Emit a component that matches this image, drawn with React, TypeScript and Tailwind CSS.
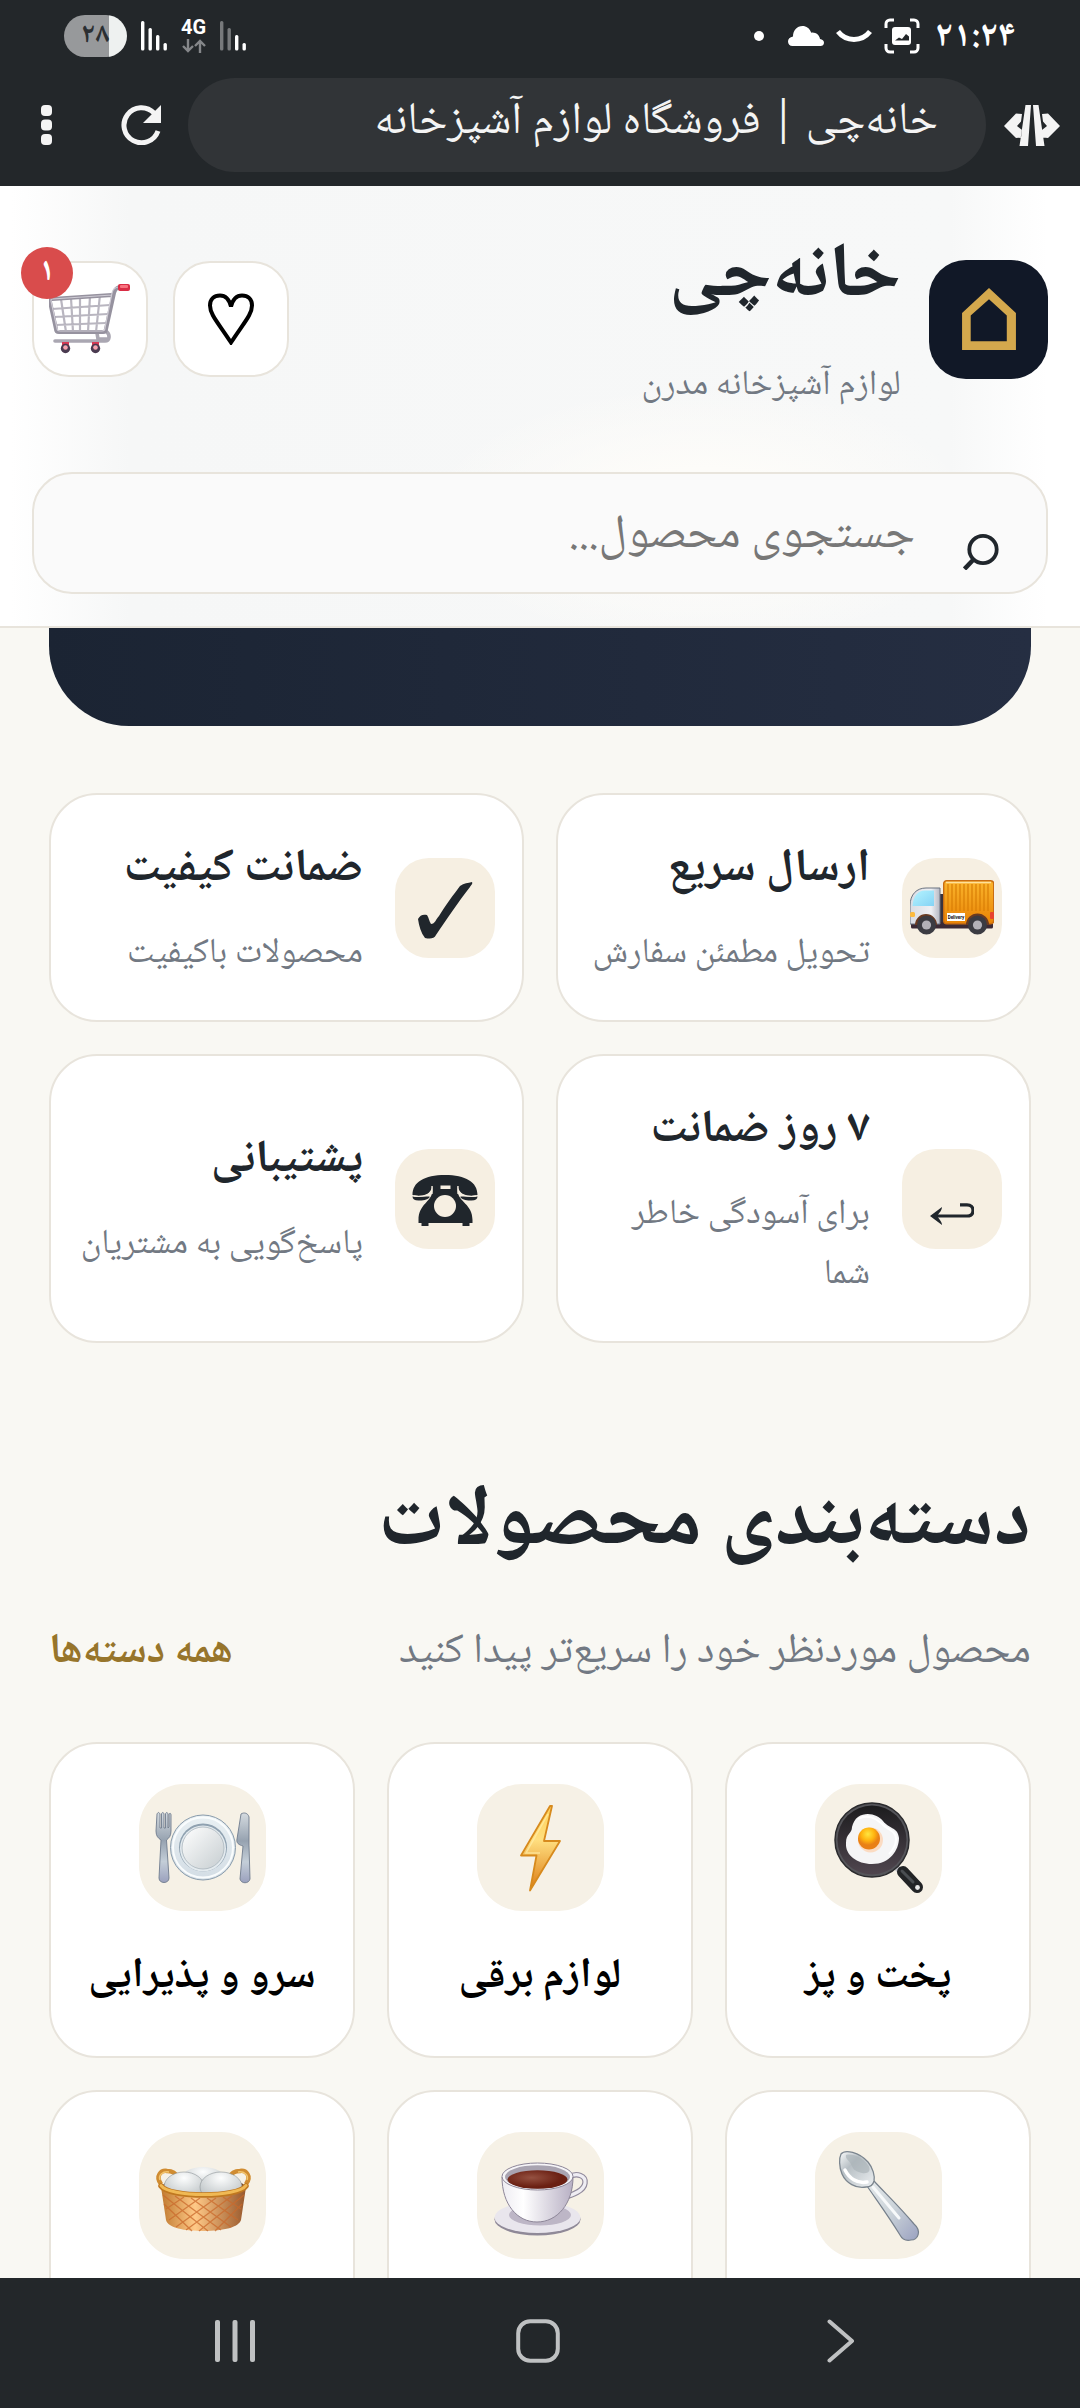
import type { ReactNode } from 'react'

type Feature = { title: string; text: string; icon: ReactNode }
type Category = { id: string; name?: string; icon: ReactNode }

/* ---------- status bar icons ---------- */

function Signal({ weak = false }: { weak?: boolean }) {
  const bars = [22, 29, 36, 44]
  return (
    <svg width="26" height="30" viewBox="0 22 26 30" aria-hidden="true">
      {bars.map((top, i) => (
        <rect key={top} x={i * 7.5} y={top} width="3.4" height={51.5 - top} rx="1.5" fill={weak && i < 2 ? '#77797b' : '#fff'} />
      ))}
    </svg>
  )
}

function CaptureIcon() {
  return (
    <svg width="36" height="36" viewBox="0 0 36 36" fill="none" aria-hidden="true">
      <path d="M2 10V6a4 4 0 0 1 4-4h4M26 2h4a4 4 0 0 1 4 4v4M34 26v4a4 4 0 0 1-4 4h-4M10 34H6a4 4 0 0 1-4-4v-4" stroke="#fff" strokeWidth="3" />
      <rect x="8" y="9" width="19" height="18" rx="3" fill="#fff" />
      <path d="M11 22.500l4-3 3 1.500 4-5 3 2.500v4z" fill="#23272a" />
    </svg>
  )
}

function CloudIcon() {
  return (
    <svg width="36" height="20" viewBox="0 0 36 20" aria-hidden="true">
      <path d="M4.500 20C1.800 20 0 18 0 15.500S1.800 11 5 10.500C5 4.500 9 0 14.500 0c4 0 7 2.200 8.700 6.700C27.500 6 31.500 9 32 13c2.400.3 4 1.700 4 3.700S34.500 20 32.500 20z" fill="#fff" />
    </svg>
  )
}

function ArcIcon() {
  return (
    <svg width="36" height="14" viewBox="0 0 36 14" fill="none" aria-hidden="true">
      <path d="M2 2.500C10 13 26 13 34 2.500" stroke="#fff" strokeWidth="5" />
    </svg>
  )
}

function DataArrows() {
  return (
    <svg width="24" height="14" viewBox="0 0 24 14" fill="none" stroke="#85878a" strokeWidth="2.400" aria-hidden="true">
      <path d="M6 0v12M1 7l5 5 5-5M18 14V2M13 7l5-5 5 5" />
    </svg>
  )
}

/* ---------- browser icons ---------- */

function CodeIcon() {
  return (
    <svg width="56" height="44" viewBox="0 -2 56 44" aria-hidden="true">
      <path d="M18 9l-6-.5L0 21l12 12 5-.5 1-7.500-5-4 4-4.500zM38 9l6-.5L56 21 44 33l-5-.5-1-7.500 5-4-4-4.500zM21.500 0H27l-3 41h-8.500zM29 0h5.500l6 41H32z" fill="#f4f4f4" />
    </svg>
  )
}

function ReloadIcon() {
  return (
    <svg width="40" height="40" viewBox="0 0 40 40" fill="none" aria-hidden="true">
      <path d="M37 26A17.500 17.500 0 1 1 33 8" stroke="#f4f4f4" strokeWidth="5" />
      <path d="M40 0v18H22z" fill="#f4f4f4" />
    </svg>
  )
}

function DotsIcon() {
  return (
    <svg width="11" height="40" viewBox="0 0 11 40" fill="#f4f4f4" aria-hidden="true">
      <rect width="11" height="11" rx="4" />
      <rect y="14.500" width="11" height="11" rx="4" />
      <rect y="29" width="11" height="11" rx="4" />
    </svg>
  )
}

/* ---------- header icons ---------- */

function HouseIcon() {
  return (
    <svg width="54" height="62" viewBox="0 0 53 61" aria-hidden="true">
      <path fillRule="evenodd" d="M0 24.500L26.500 0 53 24.500V61H0zM8.500 27v25.500H44V27L26.500 11z" fill="#d4a84d" />
    </svg>
  )
}

function HeartIcon() {
  return (
    <svg width="46" height="52" viewBox="0 0 46 51" fill="none" aria-hidden="true">
      <path d="M23 13C21 5 17 2 12 2 6 2 2 6 2 12c0 9 8 17 21 37 13-20 21-28 21-37 0-6-4-10-10-10-5 0-9 3-11 11z" stroke="#000" strokeWidth="4" />
    </svg>
  )
}

function CartIcon() {
  return (
    <svg width="82" height="70" viewBox="0 0 82 70" fill="none" aria-hidden="true">
      <g stroke="#b9b6c0" strokeWidth="2.200">
        <path d="M12 15l5 33M22 14l2 34M31 13v35M41 12l-2 36M51 11l-4 37M3 25l58-4M5 33l54-3M6 41l51-2" />
      </g>
      <path d="M48 49l1 6h10M58 48c3 3 3 9-2 9H6" stroke="#aaa7b2" strokeWidth="3.600" strokeLinecap="round" />
      <path d="M63 11L3 15c-2 0-2 1-2 3l6 27c0 3 1 3 3 3h44c2 0 3-1 3-3l8-36c1-4 3-6 7-6" stroke="#96929f" strokeWidth="4" strokeLinejoin="round" />
      <path d="M63 11L3 15c-1 0-1 1-1 2l6 27c0 2 1 3 3 3h42c2 0 3-1 3-3l7-35c1-4 3-6 7-6" stroke="#cfccd5" strokeWidth="1.200" />
      <rect x="69" y="0" width="12" height="7" rx="2" fill="#d92d45" />
      <rect x="71" y="1" width="8" height="3" rx="1" fill="#f7737f" />
      <path d="M13 58h7v6h-7zM43 58h7v6h-7z" fill="#d63a55" />
      <circle cx="16.500" cy="64.500" r="4.700" fill="#4a3a50" />
      <circle cx="46.500" cy="64.500" r="4.700" fill="#4a3a50" />
      <circle cx="16.500" cy="63.500" r="2.300" fill="#f7a3ae" />
      <circle cx="46.500" cy="63.500" r="2.300" fill="#f7a3ae" />
    </svg>
  )
}

function SearchIcon() {
  return (
    <svg width="36" height="74" viewBox="0 -38 36 74" fill="none" className="shrink-0" aria-hidden="true">
      <circle cx="20" cy="15.500" r="13.700" stroke="#20262c" strokeWidth="3.800" />
      <path d="M11 25l-9.500 10" stroke="#20262c" strokeWidth="4.500" />
    </svg>
  )
}

/* ---------- feature icons ---------- */

function TruckIcon() {
  return (
    <svg width="84" height="55" viewBox="0 0 84 55" aria-hidden="true">
      <defs>
        <linearGradient id="cargo" x1="0" y1="0" x2="0" y2="1"><stop stopColor="#fbb52c" /><stop offset="1" stopColor="#e98406" /></linearGradient>
        <linearGradient id="glass" x1="0" y1="0" x2="1" y2="1"><stop stopColor="#b5f4ff" /><stop offset="1" stopColor="#85d3f5" /></linearGradient>
        <linearGradient id="cab" x1="0" y1="0" x2="1" y2="0"><stop stopColor="#d9dce3" /><stop offset=".7" stopColor="#eff0f4" /><stop offset="1" stopColor="#b4b7c2" /></linearGradient>
      </defs>
      <path d="M29 14h6v34h-6z" fill="#39333f" />
      <path d="M1 42h82v5a1.500 1.500 0 0 1-1.500 1.500h-79A1.500 1.500 0 0 1 1 47z" fill="#3c2a35" />
      <rect x="33.700" y=".7" width="50" height="43" rx="3" fill="url(#cargo)" stroke="#c96d12" strokeWidth="1.400" />
      <path d="M36 2.500h45" stroke="#ffe09a" strokeWidth="1.600" />
      <path d="M38 4v27M42 4v27M46 4v27M50 4v27M54 4v27M58 4v27M62 4v27M66 4v27M70 4v27M74 4v27M78 4v27" stroke="#d97f05" strokeWidth="1.200" />
      <path d="M0 44V26C0 14 7 8 16 8h14v36z" fill="url(#cab)" stroke="#6b7380" strokeWidth="1" />
      <path d="M2.500 26C3 16 8 10.500 15 10.500h9V26z" fill="url(#glass)" />
      <rect x="0" y="32" width="5" height="5" rx="1.500" fill="#fdbb3f" />
      <rect x="80" y="32" width="4" height="7" rx="1" fill="#e8432f" />
      <rect x="37" y="33" width="18" height="8" fill="#fff" />
      <text x="46" y="38.800" textAnchor="middle" fontSize="4.600" fontWeight="700" fontFamily="Roboto, sans-serif" fill="#111">Delivery</text>
      <path d="M5 45a11 11 0 0 1 22 0zM56 45a11 11 0 0 1 23 0z" fill="#6a3b22" />
      <circle cx="16.500" cy="45" r="9.500" fill="#3b3b42" />
      <circle cx="67.500" cy="45" r="9.500" fill="#3b3b42" />
      <circle cx="16.500" cy="45" r="4.600" fill="#b3b1b8" />
      <circle cx="67.500" cy="45" r="4.600" fill="#b3b1b8" />
    </svg>
  )
}

function CheckIcon() {
  return (
    <svg width="55" height="68" viewBox="0 -8 55 68" aria-hidden="true">
      <path d="M0 37c2-4 5-5 9-4 2 3 2 6 4 9 4 0 5-5 8-8C27 24 36 12 42 4c4-3 8-3 12-4 1 2-1 3-2 5C41 19 28 38 18 53c-2 4-6 4-11 3C3 51 1 44 0 37z" fill="#20262c" />
    </svg>
  )
}

function ReturnIcon() {
  return (
    <svg width="44" height="52" viewBox="0 -30 44 52" fill="none" aria-hidden="true">
      <path d="M4 13h33c4 0 6-2 6-5.500S41 1.800 37 1.800h-7" stroke="#20262c" strokeWidth="3.200" />
      <path d="M12 4L0 13l12 9c0-3-2-5-5-9 3-4 5-6 5-9z" fill="#20262c" />
    </svg>
  )
}

function PhoneIcon() {
  return (
    <svg width="66" height="56" viewBox="0 -4 65 56" aria-hidden="true">
      <path d="M20 10h25v6c1 11 15 13 15 29v3h-3v3h-7v-3H16v3H9v-3H6v-3c0-16 13-18 14-29z" fill="#20262c" />
      <path d="M0 20C0 7 12 0 32.500 0S65 7 65 20l-6 1c-8 0-12-3-14-10H20c-2 7-6 10-14 10z" fill="#20262c" />
      <path d="M0 21.500h17v1C15 25 10 25.500 6 25.500S0 24 0 21.500zM48 21.500h17c0 2.500-2 4-6 4s-9-.5-11-3z" fill="#20262c" />
      <path d="M19.500 11v8M45.500 11v8M1 21c8 1 14 0 18-4M64 21c-8 1-14 0-18-4" stroke="#f6efe2" strokeWidth="1.300" fill="none" />
      <ellipse cx="32.500" cy="31" rx="11" ry="11" fill="#f6efe2" />
      <path d="M28 10.500h10v3.500H28z" fill="#f6efe2" />
    </svg>
  )
}

/* ---------- category icons, all on the 127px tile grid ---------- */

function Tile({ children }: { children: ReactNode }) {
  return <svg width="127" height="127" viewBox="0 0 127 127" aria-hidden="true">{children}</svg>
}

function PanIcon() {
  return (
    <Tile>
      <defs>
        <linearGradient id="pan" x1="0" y1="0" x2="0" y2="1"><stop stopColor="#1c1c1e" /><stop offset="1" stopColor="#50464f" /></linearGradient>
        <radialGradient id="yolk" cx=".45" cy=".3"><stop stopColor="#ffe640" /><stop offset=".6" stopColor="#ffb30f" /><stop offset="1" stopColor="#e98016" /></radialGradient>
      </defs>
      <path d="M80 82l7 7" stroke="#c6c6cc" strokeWidth="6" />
      <path d="M88 88l14 15" stroke="#222426" strokeWidth="12" strokeLinecap="round" />
      <path d="M87 87l11 11" stroke="#4a4e52" strokeWidth="3" strokeLinecap="round" />
      <circle cx="102.500" cy="103.500" r="2.400" fill="#e9e9e9" />
      <circle cx="57" cy="56" r="37" fill="#55555a" stroke="#2a2a2d" strokeWidth="1.500" />
      <circle cx="57" cy="56" r="34.500" fill="url(#pan)" />
      <path d="M43 33c9-6 20-2 25 4 6 8 15 6 16 17 0 12-9 26-27 26-15 0-27-9-26-21 0-10 6-9 6-16 1-4 3-8 6-10z" fill="#f5f5f6" />
      <path d="M43 35c9-5 18-1 23 4 6 7 15 7 15 16 0 5-3 11-7 15" stroke="#fff" strokeWidth="2" fill="none" />
      <circle cx="55.500" cy="56" r="12.500" fill="#ffc9a0" opacity=".6" />
      <circle cx="54" cy="54.500" r="11" fill="url(#yolk)" />
    </Tile>
  )
}

function BoltIcon() {
  return (
    <Tile>
      <defs>
        <linearGradient id="bolt" x1="0" y1="0" x2="0" y2="1"><stop stopColor="#ffd158" /><stop offset=".4" stopColor="#ffdf80" /><stop offset="1" stopColor="#dc7a12" /></linearGradient>
      </defs>
      <path d="M73 22L44 71.500h15.500L53 106.500 83 57H67l8-35z" fill="url(#bolt)" stroke="#d78a1d" strokeWidth="1.800" strokeLinejoin="round" />
      <path d="M71 30L49 69h14" stroke="#ffeeaa" strokeWidth="1.500" fill="none" opacity=".7" />
    </Tile>
  )
}

function PlateIcon() {
  return (
    <Tile>
      <defs>
        <linearGradient id="steel" x1="0" y1="0" x2="0" y2="1"><stop stopColor="#d5dbe0" /><stop offset=".4" stopColor="#96a2b0" /><stop offset=".7" stopColor="#c4ced8" /><stop offset="1" stopColor="#9aa0bd" /></linearGradient>
        <linearGradient id="dish" x1="0" y1="0" x2="1" y2="1"><stop stopColor="#fff" /><stop offset="1" stopColor="#c6cdd0" /></linearGradient>
        <linearGradient id="lip" x1="0" y1="0" x2="0" y2="1"><stop stopColor="#e9f0f3" /><stop offset="1" stopColor="#d3dde5" /></linearGradient>
      </defs>
      <path d="M18 30c1-2 2-2 3 0v14h1.500V30c.5-2 2-2 2.500 0v14h1.500V30c.5-2 2-2 2.500 0v14l1-1V30c1-1 2-1 2 1v16c0 5-2 7-4.500 9L30 94c0 6-10 6-10 0l2-38c-3-2-5-4-5-9z" fill="url(#steel)" stroke="#6f7c8d" strokeWidth=".9" />
      <path d="M102 30c3-2 7-1 8 3v28l1 34c-1 5-9 5-10 0l3-33c-4-1-7-3-6-7z" fill="url(#steel)" stroke="#6f7c8d" strokeWidth=".9" />
      <circle cx="64" cy="63.500" r="32.500" fill="url(#lip)" stroke="#8a9cac" strokeWidth="1" />
      <circle cx="64" cy="63.500" r="30" fill="none" stroke="#f9fcfd" strokeWidth="2" />
      <circle cx="64" cy="63.500" r="24" fill="#8fa1b0" />
      <circle cx="64" cy="64.500" r="23" fill="#e4ebef" />
      <circle cx="64" cy="64" r="21" fill="url(#dish)" stroke="#aab5bd" strokeWidth=".8" />
    </Tile>
  )
}

function SpoonIcon() {
  return (
    <Tile>
      <defs>
        <linearGradient id="bowl" x1="0" y1="0" x2="1" y2="1"><stop stopColor="#fbfcfc" /><stop offset=".35" stopColor="#b7bfc4" /><stop offset="1" stopColor="#eef1f3" /></linearGradient>
        <linearGradient id="stem" x1="0" y1="0" x2="1" y2="1"><stop stopColor="#e3e8ea" /><stop offset=".5" stopColor="#cbd3d9" /><stop offset="1" stopColor="#9aa1c0" /></linearGradient>
      </defs>
      <path d="M52 54c3-1 5-3 7-5 10 11 24 24 40 43 8 7 4 16-3 16-5 1-9-1-11-5C74 85 63 70 52 54z" fill="url(#stem)" stroke="#76808c" strokeWidth="1.200" />
      <path d="M58 55l26 31" stroke="#f7f9fa" strokeWidth="3" strokeLinecap="round" />
      <path d="M26 22c4-5 18-2 27 8 5 6 7 14 6 19-1 4-4 6-8 6-10 2-20-4-24-13-3-7-3-16-1-20z" fill="url(#bowl)" stroke="#7c868f" strokeWidth="1.300" />
      <path d="M31 23c7-2 17 3 22 10 4 6 0 9-6 8-8-2-9-4-11-9-2-4-6-5-5-9z" fill="#a9b2b7" opacity=".65" />
      <path d="M30 38c4 8 12 14 22 12" stroke="#fff" strokeWidth="3.500" fill="none" strokeLinecap="round" />
    </Tile>
  )
}

function CupIcon() {
  return (
    <Tile>
      <defs>
        <linearGradient id="cup" x1="0" y1="0" x2="1" y2="0"><stop stopColor="#eeecf2" /><stop offset=".3" stopColor="#fff" /><stop offset="1" stopColor="#b8b0c4" /></linearGradient>
        <radialGradient id="coffee" cx=".4" cy=".4"><stop stopColor="#955141" /><stop offset="1" stopColor="#6a1f12" /></radialGradient>
      </defs>
      <ellipse cx="60.500" cy="87.500" rx="43" ry="16" fill="#8f8998" />
      <ellipse cx="60.500" cy="85.500" rx="43" ry="15.500" fill="#e9e6ed" />
      <ellipse cx="63" cy="83" rx="31" ry="10.500" fill="#bdb6c6" />
      <path d="M92 45c8-5 17-1 16 6-1 8-12 12-23 15" fill="none" stroke="#918a9c" strokeWidth="5.500" />
      <path d="M92 45c8-5 17-1 16 6-1 8-12 12-23 15" fill="none" stroke="#efedf3" strokeWidth="3.200" />
      <path d="M25 45c0 27 15 45 35 45s36-18 36-45z" fill="url(#cup)" stroke="#8d8698" strokeWidth="1" />
      <ellipse cx="60.500" cy="44.500" rx="35.500" ry="13.500" fill="#f6f5f8" stroke="#8d8698" strokeWidth="1" />
      <ellipse cx="60.500" cy="45" rx="32.500" ry="11.800" fill="#a9a4b1" />
      <ellipse cx="60.500" cy="47.500" rx="30" ry="9.300" fill="url(#coffee)" />
    </Tile>
  )
}

function BasketIcon() {
  return (
    <Tile>
      <defs>
        <radialGradient id="egg" cx=".5" cy=".2" r=".8"><stop stopColor="#fdfefe" /><stop offset="1" stopColor="#b3babd" /></radialGradient>
        <linearGradient id="wicker" x1="0" y1="0" x2="1" y2="0"><stop stopColor="#c07a30" /><stop offset=".4" stopColor="#ffc987" /><stop offset="1" stopColor="#98582c" /></linearGradient>
      </defs>
      <path d="M22 52c-6-8 0-14 6-13 6 0 9 3 10 6M107 52c6-8 0-14-6-13-6 0-9 3-10 6" fill="none" stroke="#d08c31" strokeWidth="4.500" />
      <path d="M21 48c-2-5 3-9 9-8M108 48c2-5-3-9-9-8" fill="none" stroke="#f3c56e" strokeWidth="1.500" />
      <ellipse cx="64.500" cy="55" rx="42" ry="9" fill="#7d481c" />
      <ellipse cx="64" cy="47" rx="22" ry="12" fill="url(#egg)" />
      <ellipse cx="45" cy="55" rx="20" ry="15" fill="url(#egg)" stroke="#8d9497" strokeWidth=".6" />
      <ellipse cx="82" cy="55" rx="21" ry="15" fill="url(#egg)" stroke="#8d9497" strokeWidth=".6" />
      <path d="M22 55l5 33c2 8 18 11 38 11s35-4 37-11l5-33c-8 10-77 10-85 0z" fill="url(#wicker)" />
      <path d="M25 72l28 27M24 63l45 36M36 64l46 34M52 66l40 29M68 66l31 22M84 65l18 12M103 72L76 99M105 63L60 99M93 64L47 98M77 66L37 95M61 66L30 88M45 65L27 77" stroke="#c96a2c" strokeWidth="1.300" opacity=".75" fill="none" />
      <path d="M22 54c8 12 77 12 85 0" stroke="#c07820" strokeWidth="5.500" fill="none" strokeLinecap="round" />
      <path d="M22 53.500c8 12 77 12 85 0" stroke="#f0b954" strokeWidth="3" fill="none" strokeLinecap="round" />
    </Tile>
  )
}

const features: Feature[] = [
  { title: 'ارسال سریع', text: 'تحویل مطمئن سفارش', icon: <TruckIcon /> },
  { title: 'ضمانت کیفیت', text: 'محصولات باکیفیت', icon: <CheckIcon /> },
  { title: '۷ روز ضمانت', text: 'برای آسودگی خاطر شما', icon: <ReturnIcon /> },
  { title: 'پشتیبانی', text: 'پاسخ‌گویی به مشتریان', icon: <PhoneIcon /> },
]

const categories: Category[] = [
  { id: 'cooking', name: 'پخت و پز', icon: <PanIcon /> },
  { id: 'electric', name: 'لوازم برقی', icon: <BoltIcon /> },
  { id: 'serving', name: 'سرو و پذیرایی', icon: <PlateIcon /> },
  { id: 'tools', icon: <SpoonIcon /> },
  { id: 'tea', icon: <CupIcon /> },
  { id: 'storage', icon: <BasketIcon /> },
]

function StatusBar() {
  return (
    <div className="flex h-[72px] items-center justify-between px-16 text-white">
      <div className="flex items-center gap-3">
        <span className="me-1 pt-1.5 text-[36px] leading-[48px] font-bold">۲۱:۲۴</span>
        <CaptureIcon />
        <ArcIcon />
        <CloudIcon />
        <span className="ms-3 size-[10px] rounded-full bg-white" />
      </div>
      <div className="flex items-center gap-[14px]">
        <Signal weak />
        <span className="flex flex-col items-center gap-1 font-['Roboto'] text-[20px] leading-[16px] font-bold">
          4G
          <DataArrows />
        </span>
        <Signal />
        <span className="flex h-[42px] w-[63px] items-center justify-center rounded-full bg-linear-to-r from-[#97999b] from-72% to-[#eef1f0] to-72% text-[28px] leading-[42px] font-bold text-[#2b2f32]">
          ۲۸
        </span>
      </div>
    </div>
  )
}

function BrowserBar() {
  return (
    <div className="flex items-center px-5 pt-[6px] pb-[14px]">
      <button type="button" aria-label="کد صفحه"><CodeIcon /></button>
      <div className="ms-[18px] me-[27px] h-[94px] flex-1 truncate rounded-full bg-[#313437] px-12 text-[45px] leading-[92px] text-[#f4f4f4]">
        خانه‌چی | فروشگاه لوازم آشپزخانه
      </div>
      <button type="button" aria-label="بارگذاری دوباره"><ReloadIcon /></button>
      <button type="button" aria-label="منو" className="ms-[69px] me-[21px]"><DotsIcon /></button>
    </div>
  )
}

function Header() {
  return (
    <header className="border-b-2 border-[#e8e4dc] bg-[radial-gradient(ellipse_at_65%_75%,#fdfcf9_0%,#fdfcf9_10%,transparent_28%),linear-gradient(to_right,#fff_1%,#f6f7f7_12%,#f7f8f8_88%,#fff_97%)] px-8 pt-[26px] pb-8">
      <div className="flex items-center">
        <div className="flex size-[119px] shrink-0 items-center justify-center rounded-[37px] bg-[#111827]">
          <HouseIcon />
        </div>
        <div className="ms-7 flex-1">
          <h1 className="text-[77px] leading-[136px] font-bold text-[#20262c]">خانه‌چی</h1>
          <p className="text-[35px] leading-[78px] text-[#727983]">لوازم آشپزخانه مدرن</p>
        </div>
        <div className="flex gap-[25px]">
          <button type="button" aria-label="علاقه‌مندی‌ها" className="flex size-[116px] items-center justify-center rounded-[37px] border-2 border-[#e8e4dc] bg-white">
            <HeartIcon />
          </button>
          <button type="button" aria-label="سبد خرید" className="relative flex size-[116px] items-center justify-center rounded-[37px] border-2 border-[#e8e4dc] bg-white">
            <CartIcon />
            <span className="absolute -top-4 -left-[13px] flex size-[52px] items-center justify-center rounded-full bg-[#d94c4c] text-[32px] leading-[40px] font-bold text-white">
              ۱
            </span>
          </button>
        </div>
      </div>
      <label className="mt-[46px] flex h-[122px] items-center gap-12 rounded-[40px] border-2 border-[#e8e4dc] bg-[#fafafa] px-[47px]">
        <SearchIcon />
        <input
          type="search"
          aria-label="جستجوی محصول"
          placeholder="جستجوی محصول..."
          className="h-full min-w-0 flex-1 bg-transparent pt-1.5 text-[48px] outline-none placeholder:text-[#777777]"
        />
      </label>
    </header>
  )
}

function FeatureCard({ feature }: { feature: Feature }) {
  return (
    <article className="flex items-center gap-8 rounded-[48px] border-2 border-[#e8e4dc] bg-white px-[27px] py-[35px]">
      <div className="flex size-[100px] shrink-0 items-center justify-center rounded-[34px] bg-[#f6efe2]">{feature.icon}</div>
      <div className="flex-1">
        <h3 className="text-[46px] leading-[80px] font-bold text-[#20262c]">{feature.title}</h3>
        <p className="mt-[15px] text-[35px] leading-[60px] text-[#727983]">{feature.text}</p>
      </div>
    </article>
  )
}

function CategoryCard({ category }: { category: Category }) {
  return (
    <a href="#" className="flex flex-col items-center rounded-[48px] border-2 border-[#e8e4dc] bg-white px-4 pt-10 pb-[38px] text-black">
      <div className="rounded-[45px] bg-[#f6f1e6]">{category.icon}</div>
      <span className="mt-[27px] min-h-20 text-[42px] leading-[80px] font-bold whitespace-nowrap">{category.name}</span>
    </a>
  )
}

function NavBar() {
  return (
    <nav className="flex h-[130px] shrink-0 items-center bg-[#23272a] pr-[88px] pb-1 pl-[84px]">
      <button type="button" aria-label="بازگشت" className="flex flex-1 items-center justify-center">
        <svg width="28" height="44" viewBox="0 0 28 44" fill="none" aria-hidden="true">
          <path d="M2.500 2.500L25 22 2.500 41.500" stroke="#bfc1c2" strokeWidth="4" strokeLinecap="round" strokeLinejoin="round" />
        </svg>
      </button>
      <button type="button" aria-label="خانه" className="flex flex-1 items-center justify-center">
        <svg width="44" height="44" viewBox="0 0 44 44" fill="none" aria-hidden="true">
          <rect x="2.200" y="2.200" width="39.600" height="39.600" rx="12" stroke="#bfc1c2" strokeWidth="4" />
        </svg>
      </button>
      <button type="button" aria-label="برنامه‌های اخیر" className="flex flex-1 items-center justify-center">
        <svg width="40" height="42" viewBox="0 0 40 42" fill="#bfc1c2" aria-hidden="true">
          <rect width="5" height="42" rx="2" />
          <rect x="17.500" width="5" height="42" rx="2" />
          <rect x="35" width="5" height="42" rx="2" />
        </svg>
      </button>
    </nav>
  )
}

export default function App() {
  return (
    <div dir="rtl" lang="fa" className="flex h-screen flex-col overflow-hidden bg-[#f9f8f3] font-['Noto_Naskh_Arabic','DejaVu_Sans',sans-serif]">
      <div className="bg-[#23272a]">
        <StatusBar />
        <BrowserBar />
      </div>
      <Header />

      <main className="min-h-0 flex-1 overflow-hidden px-[49px]">
        {/* tail of the hero banner under the sticky header */}
        <div className="h-[98px] rounded-b-[80px] bg-linear-to-r from-[#1b2433] to-[#252e42]" />

        <section className="mt-[67px] grid grid-cols-2 gap-8">
          {features.map(f => <FeatureCard key={f.title} feature={f} />)}
        </section>

        <section className="mt-[112px]">
          <h2 className="text-[85px] leading-[142px] font-bold text-[#20262c]">دسته‌بندی محصولات</h2>
          <div className="mt-4 flex items-center justify-between leading-[80px]">
            <p className="text-[42px] text-[#727983]">محصول موردنظر خود را سریع‌تر پیدا کنید</p>
            <a href="#" className="text-[42px] font-bold text-[#97752b]">همه دسته‌ها</a>
          </div>
          <div className="mt-[49px] grid grid-cols-3 gap-8">
            {categories.map(c => <CategoryCard key={c.id} category={c} />)}
          </div>
        </section>
      </main>

      <NavBar />
    </div>
  )
}
